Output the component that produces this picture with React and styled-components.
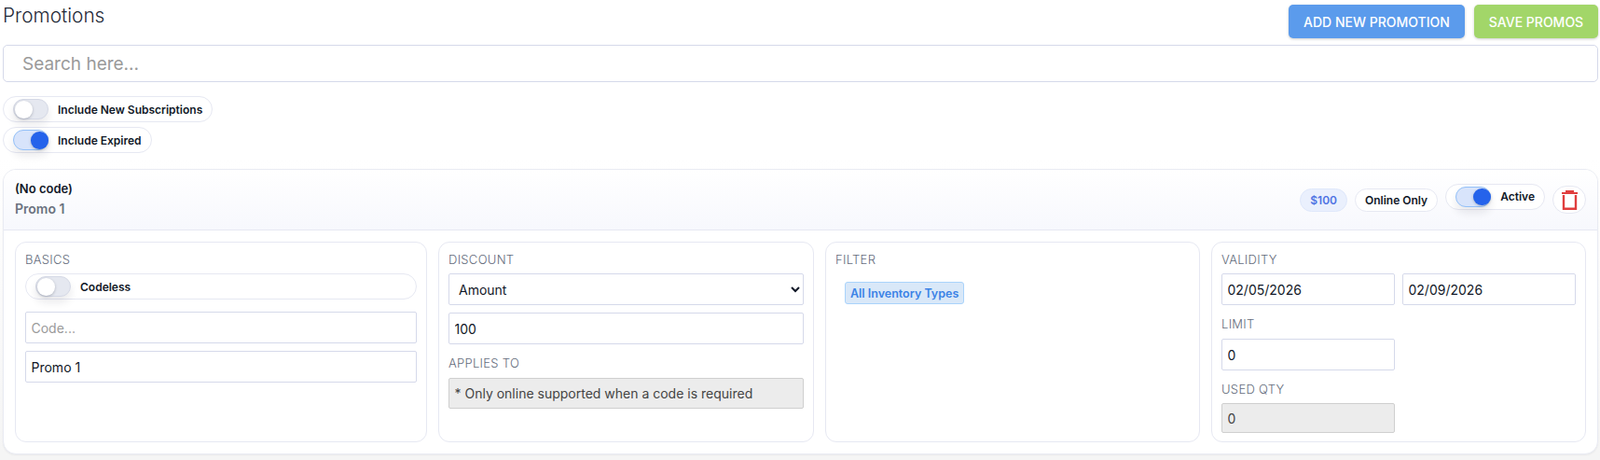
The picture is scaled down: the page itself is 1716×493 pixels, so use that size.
import React from "react";
import styled, { createGlobalStyle } from "styled-components";

const GlobalStyle = createGlobalStyle`
  * { box-sizing: border-box; }
  html, body { margin: 0; padding: 0; background: #fff; }
  body {
    font-family: Inter, "Liberation Sans", sans-serif;
    color: #111827;
  }
  #root { min-height: 493px; }
`;

const Page = styled.div`
  height: 493px;
  padding: 5px 2px 0 3px;
  overflow: hidden;
  background: linear-gradient(180deg, #fff 0, #fff 170px, #f5f5f5 487px);
`;

// -------------------- Top --------------------
const TopBar = styled.div`
  display: flex;
  justify-content: space-between;
  align-items: flex-start;
  height: 36px;
`;

const Title = styled.h1`
  margin: 0;
  font-size: 20.8px;
  line-height: 24px;
  font-weight: 300;
  color: #1f2937;
`;

const Actions = styled.div`
  display: flex;
  gap: 10px;
`;

const ActionButton = styled.button`
  height: 36px;
  width: ${(p) => p.$w}px;
  border: 0;
  border-radius: 5px;
  background: ${(p) => p.$bg};
  color: #fff;
  font-family: inherit;
  font-size: 14px;
  font-weight: 500;
  box-shadow: 0 1px 3px rgba(0, 0, 0, 0.2);
`;

const Search = styled.input`
  display: block;
  width: 100%;
  height: 40px;
  margin-top: 7px;
  padding: 0 20px;
  border: 1px solid #d5d9ea;
  border-radius: 5px;
  background: #fff;
  font-family: inherit;
  font-size: 19px;
  &::placeholder { color: #9a9a9a; opacity: 1; }
`;

const ToggleStack = styled.div`
  display: flex;
  flex-direction: column;
  align-items: flex-start;
  gap: 5px;
  margin-top: 15px;
`;

// -------------------- Toggle --------------------
const Pill = styled.label`
  display: ${(p) => (p.$block ? "flex" : "inline-flex")};
  align-items: center;
  gap: 10px;
  height: 28px;
  padding: 0 10px;
  border: 1px solid #e6e8f2;
  border-radius: 14px;
  background: #fff;
  font-size: 12px;
  font-weight: 600;
  color: #111827;
`;

const Track = styled.span`
  position: relative;
  display: block;
  width: 38px;
  height: 22px;
  border-radius: 11px;
  border: 1px solid ${(p) => (p.$on ? "#93c0f8" : "#d5d9e6")};
  background: ${(p) => (p.$on ? "#d8e4fb" : "#e5e8f0")};
  box-shadow: 0 6px 10px rgba(17, 24, 39, 0.09);
`;

const Thumb = styled.span`
  position: absolute;
  top: 1px;
  left: ${(p) => (p.$on ? "18px" : "1px")};
  width: 18.5px;
  height: 18.5px;
  border-radius: 50%;
  background: ${(p) => (p.$on ? "#2563eb" : "#fff")};
  box-shadow: 0 1px 3px rgba(17, 24, 39, 0.25);
`;

function Toggle({ on, block, children }) {
  return (
    <Pill $block={block}>
      <Track $on={on}>
        <Thumb $on={on} />
      </Track>
      {children}
    </Pill>
  );
}

// -------------------- Card --------------------
const Card = styled.section`
  height: 306px;
  margin-top: 17px;
  border: 1px solid #e9ebf3;
  border-radius: 14px;
  background: #fff;
  box-shadow: 0 1px 2px rgba(17, 24, 39, 0.05);
  overflow: hidden;
`;

const CardHead = styled.header`
  display: flex;
  justify-content: space-between;
  align-items: center;
  height: 65px;
  padding: 0 12px;
  border-bottom: 1px solid #e6e8f2;
  background: linear-gradient(180deg, #fff, #f7f8fd);
`;

const HeadTitles = styled.div`
  margin-bottom: 2px;
`;

const CodeName = styled.div`
  font-size: 13px;
  line-height: 16px;
  font-weight: 600;
  color: #111827;
`;

const PromoName = styled.div`
  margin-top: 6px;
  font-size: 14px;
  line-height: 16px;
  font-weight: 600;
  color: #6b7280;
`;

const HeadRight = styled.div`
  display: flex;
  align-items: center;
  gap: 8px;
`;

const HeadToggle = styled.div`
  margin-bottom: 6px;
`;

const Badge = styled.span`
  display: inline-flex;
  align-items: center;
  height: 25px;
  padding: 0 10px;
  border: 1px solid ${(p) => (p.$blue ? "#dfe8fb" : "#e6e8f2")};
  border-radius: 13px;
  background: ${(p) => (p.$blue ? "#eaf0fd" : "#fff")};
  color: ${(p) => (p.$blue ? "#4f74e3" : "#111827")};
  font-size: 12px;
  font-weight: 600;
`;

const TrashButton = styled.button`
  display: flex;
  align-items: center;
  justify-content: center;
  width: 36px;
  height: 30px;
  padding: 0;
  border: 1px solid #e6e8f2;
  border-radius: 15px;
  background: #fff;
`;

const Body = styled.div`
  display: grid;
  grid-template-columns: 442px 403px 402px 402px;
  gap: 12px;
  padding: 12px;
`;

const Panel = styled.div`
  height: 215px;
  padding: 10px;
  border: 1px solid #e6e8f2;
  border-radius: 12px;
  background: #fff;
`;

const Label = styled.div`
  margin-top: ${(p) => p.$top || 0}px;
  margin-bottom: ${(p) => p.$bottom || 7}px;
  font-size: 13px;
  line-height: 16px;
  font-weight: 300;
  letter-spacing: 0.3px;
  color: #646c7c;
  text-transform: uppercase;
`;

const Field = styled.input`
  display: block;
  width: ${(p) => p.$w || "100%"};
  height: ${(p) => p.$h || 34}px;
  margin-top: ${(p) => p.$top || 0}px;
  padding: 0 5.5px;
  border: 1px solid #d5d9ea;
  border-radius: 2px;
  background: #fff;
  color: #111827;
  font-family: inherit;
  font-size: 14px;
  &::placeholder { color: #9a9a9a; opacity: 1; }
  &:disabled {
    background: #ececec;
    border-color: #cfcfcf;
    color: #444;
  }
`;

const Select = styled.select`
  display: block;
  width: 100%;
  height: 34px;
  padding: 0 6px;
  border: 1px solid #d5d9ea;
  border-radius: 2px;
  background: #fff;
  color: #111827;
  font-family: inherit;
  font-size: 14px;
`;

const Chips = styled.div`
  display: flex;
  padding: 9px 10px;
`;

const Chip = styled.span`
  display: inline-flex;
  align-items: center;
  height: 24px;
  padding: 0 5px;
  border: 1.5px solid #a9d3fb;
  border-radius: 3px;
  background: #d9e8f8;
  color: #3b82e6;
  font-size: 12.5px;
  font-weight: 600;
`;

const DateRow = styled.div`
  display: grid;
  grid-template-columns: 186px 186px;
  gap: 8px;
`;

function TrashIcon() {
  return (
    <svg width="17" height="21" viewBox="0 0 17 21" fill="none">
      <path d="M4 1h9M0 3h17" stroke="#e03e3e" strokeWidth="2" />
      <path d="M2 5v14.8h13V5" stroke="#e03e3e" strokeWidth="2.4" />
    </svg>
  );
}

export default function App() {
  return (
    <>
      <GlobalStyle />
      <Page>
        <TopBar>
          <Title>Promotions</Title>
          <Actions>
            <ActionButton $w={189} $bg="#5b9bec">ADD NEW PROMOTION</ActionButton>
            <ActionButton $w={133} $bg="#a2d669">SAVE PROMOS</ActionButton>
          </Actions>
        </TopBar>
        <Search placeholder="Search here..." />
        <ToggleStack>
          <Toggle>Include New Subscriptions</Toggle>
          <Toggle on>Include Expired</Toggle>
        </ToggleStack>

        <Card>
          <CardHead>
            <HeadTitles>
              <CodeName>(No code)</CodeName>
              <PromoName>Promo 1</PromoName>
            </HeadTitles>
            <HeadRight>
              <Badge $blue>$100</Badge>
              <Badge>Online Only</Badge>
              <HeadToggle>
                <Toggle on>Active</Toggle>
              </HeadToggle>
              <TrashButton aria-label="Delete">
                <TrashIcon />
              </TrashButton>
            </HeadRight>
          </CardHead>
          <Body>
            <Panel>
              <Label>Basics</Label>
              <Toggle block>Codeless</Toggle>
              <Field $top={13} placeholder="Code..." readOnly />
              <Field $top={8} value="Promo 1" readOnly />
            </Panel>
            <Panel>
              <Label>Discount</Label>
              <Select defaultValue="amount">
                <option value="amount">Amount</option>
              </Select>
              <Field $top={8} value="100" readOnly />
              <Label $top={12} $bottom={8}>Applies to</Label>
              <Field $h={33} value="* Only online supported when a code is required" disabled />
            </Panel>
            <Panel>
              <Label>Filter</Label>
              <Chips>
                <Chip>All Inventory Types</Chip>
              </Chips>
            </Panel>
            <Panel>
              <Label>Validity</Label>
              <DateRow>
                <Field value="02/05/2026" readOnly />
                <Field value="02/09/2026" readOnly />
              </DateRow>
              <Label $top={12} $bottom={8}>Limit</Label>
              <Field $w="186px" value="0" readOnly />
              <Label $top={12}>Used qty</Label>
              <Field $w="186px" $h={32} value="0" disabled />
            </Panel>
          </Body>
        </Card>
      </Page>
    </>
  );
}
